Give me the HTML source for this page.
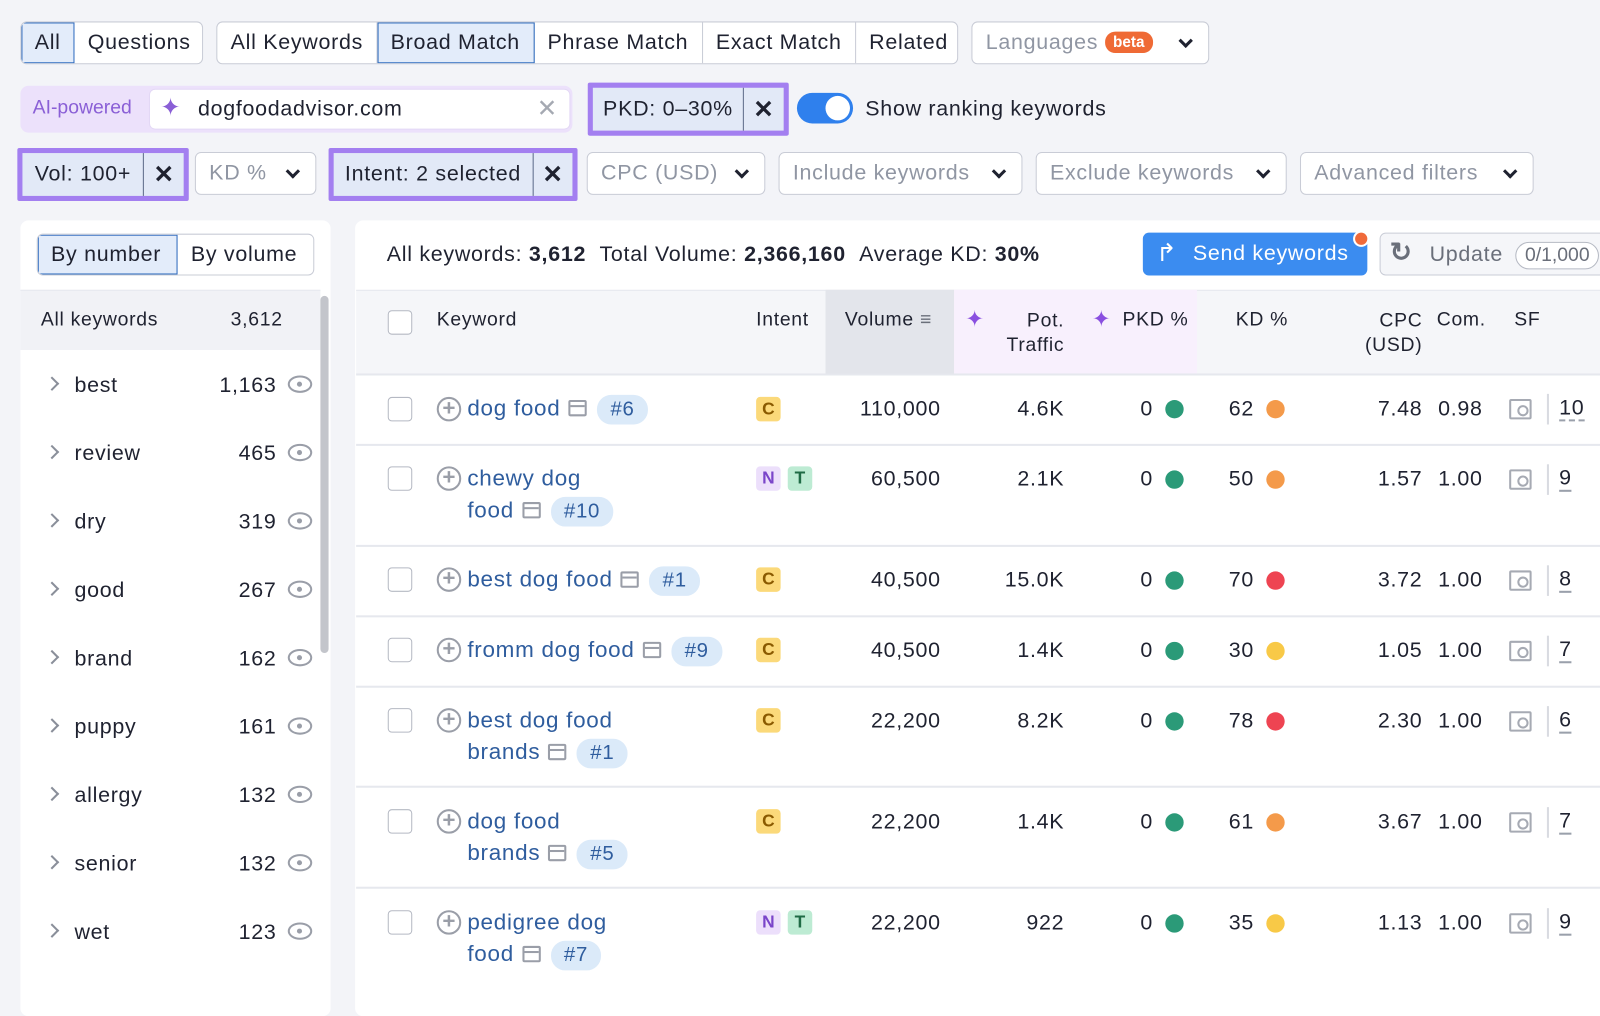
<!DOCTYPE html>
<html><head><meta charset="utf-8"><style>
*{box-sizing:border-box;margin:0;padding:0}
html,body{width:1600px;height:988px;overflow:hidden;background:#f3f4f8}
#w{position:absolute;left:0;top:0;width:1600px;height:968px;transform:scale(1.0204);transform-origin:0 0;font-family:"Liberation Sans",sans-serif;color:#1f2230;font-size:21px;letter-spacing:0.7px}
.a{position:absolute;white-space:nowrap}
.btn{position:absolute;height:42px;border:1px solid #c9ccd6;background:#fff;display:flex;align-items:center;border-radius:6px;overflow:hidden}
.btn span{padding:0 13px;height:100%;display:flex;align-items:center;border-right:1px solid #c9ccd6;white-space:nowrap}
.btn span:last-child{border-right:none}
.sel{background:#e3ecfa;outline:1px solid #2f6cbf;outline-offset:-1px}
.chip{position:absolute;height:52px;background:#a37ff0;padding:5px;border-radius:2px}
.chip div{background:#e2e9f7;height:42px;display:flex;align-items:center;color:#1f2230;white-space:nowrap}
.chip b{font-weight:bold;border-left:1px solid #5d6b89;height:100%;display:flex;align-items:center;padding:0 9px;font-size:24px}
.dd{position:absolute;height:42px;border:1px solid #c9ccd6;background:#fff;border-radius:6px;color:#9096a3;display:flex;align-items:center;padding:0 13px;justify-content:space-between;white-space:nowrap}
.chev{width:10px;height:10px;border-right:3px solid #1f2230;border-bottom:3px solid #1f2230;transform:rotate(45deg);margin:-5px 4px 0 10px}
.lrow{position:absolute;left:20px;width:294px;height:67px}
.lrow .n{position:absolute;left:53px;top:22px}
.lrow .c{position:absolute;right:43px;top:22px}
.lrow .ar{position:absolute;left:26px;top:27px;width:10px;height:10px;border-right:2px solid #8a8f9a;border-top:2px solid #8a8f9a;transform:rotate(45deg)}
.eye{position:absolute;right:8px;top:24px;width:24px;height:17px;border:2.5px solid #9a9ea8;border-radius:50%/50%}
.eye:after{content:"";position:absolute;left:7px;top:4px;width:5px;height:5px;background:#9a9ea8;border-radius:50%}
.cb{position:absolute;left:380px;width:24px;height:24px;border:1.5px solid #b5b9c3;border-radius:4px;background:#fff}
.plus{position:absolute;left:428px;width:24px;height:24px;border:2.5px solid #9a9ea8;border-radius:50%;color:#9a9ea8;font-size:22px;line-height:17px;text-align:center;font-weight:bold;letter-spacing:0}
.kw{position:absolute;left:458px;color:#2f5d9e;font-size:22px}
.ic{display:inline-block;width:18px;height:16px;border:2.5px solid #9a9ea8;border-radius:2px;vertical-align:-1px;margin-left:8px;position:relative}
.ic:after{content:"";position:absolute;left:0;right:0;top:3px;border-top:2.5px solid #9a9ea8}
.pos{display:inline-block;background:#dbeaf9;color:#2f5d9e;border-radius:14px;padding:3px 13px;margin-left:10px;font-size:20px}
.tag{position:absolute;width:24px;height:24px;border-radius:4px;font-size:17px;font-weight:bold;text-align:center;line-height:24px;letter-spacing:0}
.C{background:#fbd97a;color:#8a5a00}.N{background:#ecdffb;color:#7a45c9}.T{background:#bdebd3;color:#1f6b45}
.r{position:absolute;text-align:right;white-space:nowrap}
.dot{position:absolute;width:18px;height:18px;border-radius:50%}
.g{background:#2b9a78}.o{background:#f49a4a}.rd{background:#ee4452}.y{background:#f8c947}
.hl{position:absolute;left:349px;width:1251px;border-top:2px solid #e6e8ee}
.sf{position:absolute;left:1479px;width:22px;height:20px;border:2.5px solid #a6aab3;border-radius:2px}
.sf:after{content:"";position:absolute;right:1px;bottom:1px;width:7px;height:7px;border:2px solid #a6aab3;border-radius:50%}
.sep{position:absolute;left:1516px;width:2px;height:30px;background:#d9dbe1}
.sfn{position:absolute;left:1528px;font-size:21px;border-bottom:2px dashed #9aa0ab;line-height:22px}
</style></head><body><div id="w">

<div class="btn" style="left:20px;top:21px;width:179px"><span class="sel" style="width:52px">All</span><span>Questions</span></div>
<div class="btn" style="left:212px;top:21px;width:727px"><span>All Keywords</span><span class="sel">Broad Match</span><span>Phrase Match</span><span>Exact Match</span><span>Related</span></div>
<div class="dd" style="left:952px;top:21px;width:233px"><span>Languages <span style="background:#ef6a35;color:#fff;font-size:15px;border-radius:10px;padding:2px 8px;font-weight:bold;vertical-align:2px;letter-spacing:0">beta</span></span><i class="chev"></i></div>

<div class="a" style="left:20px;top:84px;width:541px;height:46px;background:#ece1fb;border-radius:8px"></div>
<div class="a" style="left:32px;top:95px;color:#8a5fd6;font-size:19px;letter-spacing:0">AI-powered</div>
<div class="a" style="left:146px;top:87px;width:413px;height:40px;background:#fff;border-radius:6px;border:1px solid #e3d8f5"></div>
<div class="a" style="left:157px;top:91px;color:#8a5fd6;font-size:24px">✦</div>
<div class="a" style="left:194px;top:95px">dogfoodadvisor.com</div>
<div class="a" style="left:526px;top:92px;color:#a5a9b2;font-size:24px">✕</div>
<div class="chip" style="left:576px;top:81px"><div><span style="padding:0 10px">PKD: 0–30%</span><b>✕</b></div></div>
<div class="a" style="left:781px;top:91px;width:55px;height:30px;background:#2f80ed;border-radius:15px"><div style="position:absolute;right:3px;top:3px;width:24px;height:24px;background:#fff;border-radius:50%"></div></div>
<div class="a" style="left:848px;top:95px">Show ranking keywords</div>

<div class="chip" style="left:17px;top:145px"><div><span style="padding:0 12px">Vol: 100+</span><b>✕</b></div></div>
<div class="dd" style="left:191px;top:149px;width:119px"><span>KD %</span><i class="chev"></i></div>
<div class="chip" style="left:322px;top:145px"><div><span style="padding:0 11px">Intent: 2 selected</span><b>✕</b></div></div>
<div class="dd" style="left:575px;top:149px;width:175px"><span>CPC (USD)</span><i class="chev"></i></div>
<div class="dd" style="left:763px;top:149px;width:239px"><span>Include keywords</span><i class="chev"></i></div>
<div class="dd" style="left:1015px;top:149px;width:246px"><span>Exclude keywords</span><i class="chev"></i></div>
<div class="dd" style="left:1274px;top:149px;width:229px"><span>Advanced filters</span><i class="chev"></i></div>

<div class="a" style="left:20px;top:216px;width:304px;height:780px;background:#fff;border-radius:8px"></div>
<div class="btn" style="left:36px;top:229px;width:272px;height:41px"><span class="sel" style="width:137px">By number</span><span>By volume</span></div>
<div class="a" style="left:20px;top:284px;width:294px;height:59px;background:#f1f2f6;border-top:1px solid #e6e8ee"></div>
<div class="a" style="left:40px;top:303px;font-size:19px">All keywords</div>
<div class="a" style="left:226px;top:303px;font-size:19px">3,612</div>
<div class="a" style="left:314px;top:290px;width:8px;height:350px;background:#c3c5cb;border-radius:4px"></div>
<div class="lrow" style="top:344px"><i class="ar"></i><span class="n">best</span><span class="c">1,163</span><i class="eye"></i></div>
<div class="lrow" style="top:411px"><i class="ar"></i><span class="n">review</span><span class="c">465</span><i class="eye"></i></div>
<div class="lrow" style="top:478px"><i class="ar"></i><span class="n">dry</span><span class="c">319</span><i class="eye"></i></div>
<div class="lrow" style="top:545px"><i class="ar"></i><span class="n">good</span><span class="c">267</span><i class="eye"></i></div>
<div class="lrow" style="top:612px"><i class="ar"></i><span class="n">brand</span><span class="c">162</span><i class="eye"></i></div>
<div class="lrow" style="top:679px"><i class="ar"></i><span class="n">puppy</span><span class="c">161</span><i class="eye"></i></div>
<div class="lrow" style="top:746px"><i class="ar"></i><span class="n">allergy</span><span class="c">132</span><i class="eye"></i></div>
<div class="lrow" style="top:813px"><i class="ar"></i><span class="n">senior</span><span class="c">132</span><i class="eye"></i></div>
<div class="lrow" style="top:880px"><i class="ar"></i><span class="n">wet</span><span class="c">123</span><i class="eye"></i></div>

<div class="a" style="left:348px;top:216px;width:1260px;height:780px;background:#fff;border-radius:8px"></div>
<div class="a" style="left:379px;top:238px">All keywords: <b>3,612</b>&nbsp;&nbsp;Total Volume: <b>2,366,160</b>&nbsp;&nbsp;Average KD: <b>30%</b></div>
<div class="a" style="left:1120px;top:228px;width:220px;height:42px;background:#3b8cf0;border-radius:6px;color:#fff;padding:9px 0 0 49px">Send keywords</div>
<div class="a" style="left:1133px;top:234px;color:#fff;font-size:24px">↱</div>
<div class="a" style="left:1326px;top:226px;width:16px;height:16px;background:#f06a3a;border-radius:50%;border:2px solid #fff"></div>
<div class="a" style="left:1352px;top:228px;width:260px;height:42px;border:1px solid #c9ccd6;background:#f5f6f9;border-radius:6px;color:#6a6f7a;padding:9px 0 0 48px">Update <span style="border:1px solid #b5b9c3;border-radius:15px;padding:2px 8px;font-size:19px;margin-left:6px;background:#fff;letter-spacing:0">0/1,000</span></div>
<div class="a" style="left:1362px;top:232px;color:#6a6f7a;font-size:26px;font-weight:bold">↻</div>

<div class="a" style="left:349px;top:284px;width:1251px;height:83px;background:#f5f6f9;border-top:1px solid #e6e8ee"></div>
<div class="a" style="left:809px;top:284px;width:126px;height:83px;background:#e3e5eb"></div>
<div class="a" style="left:935px;top:284px;width:238px;height:83px;background:#f8f0fd"></div>
<div class="cb" style="top:304px"></div>
<div class="a" style="left:428px;top:303px;font-size:19px">Keyword</div>
<div class="a" style="left:741px;top:303px;font-size:19px">Intent</div>
<div class="a" style="left:828px;top:303px;font-size:19px">Volume <span style="color:#6a6f7a">≡</span></div>
<div class="a" style="left:946px;top:300px;color:#8a4fe0;font-size:22px">✦</div>
<div class="r" style="right:557px;top:303px;font-size:19px;line-height:24px">Pot.<br>Traffic</div>
<div class="a" style="left:1070px;top:300px;color:#8a4fe0;font-size:22px">✦</div>
<div class="a" style="left:1100px;top:303px;font-size:19px">PKD %</div>
<div class="a" style="left:1211px;top:303px;font-size:19px">KD %</div>
<div class="r" style="right:206px;top:303px;font-size:19px;line-height:24px">CPC<br>(USD)</div>
<div class="a" style="left:1408px;top:303px;font-size:19px">Com.</div>
<div class="a" style="left:1484px;top:303px;font-size:19px">SF</div>

<div class="hl" style="top:366px"></div>
<div class="hl" style="top:435px"></div>
<div class="hl" style="top:534px"></div>
<div class="hl" style="top:603px"></div>
<div class="hl" style="top:672px"></div>
<div class="hl" style="top:770px"></div>
<div class="hl" style="top:869px"></div>

<div class="cb" style="top:389px"></div><div class="plus" style="top:389px">+</div>
<div class="kw" style="top:387px">dog food<i class="ic"></i><span class="pos">#6</span></div>
<div class="tag C" style="left:741px;top:389px">C</div>
<div class="r" style="right:678px;top:389px">110,000</div><div class="r" style="right:557px;top:389px">4.6K</div>
<div class="r" style="right:470px;top:389px">0</div><i class="dot g" style="left:1142px;top:392px"></i>
<div class="r" style="right:371px;top:389px">62</div><i class="dot o" style="left:1241px;top:392px"></i>
<div class="r" style="right:206px;top:389px">7.48</div><div class="r" style="right:147px;top:389px">0.98</div>
<i class="sf" style="top:391px"></i><i class="sep" style="top:386px"></i><span class="sfn" style="top:389px">10</span>

<div class="cb" style="top:457px"></div><div class="plus" style="top:457px">+</div>
<div class="kw" style="top:456px">chewy dog</div><div class="kw" style="top:487px">food<i class="ic"></i><span class="pos">#10</span></div>
<div class="tag N" style="left:741px;top:457px">N</div><div class="tag T" style="left:772px;top:457px">T</div>
<div class="r" style="right:678px;top:458px">60,500</div><div class="r" style="right:557px;top:458px">2.1K</div>
<div class="r" style="right:470px;top:458px">0</div><i class="dot g" style="left:1142px;top:461px"></i>
<div class="r" style="right:371px;top:458px">50</div><i class="dot o" style="left:1241px;top:461px"></i>
<div class="r" style="right:206px;top:458px">1.57</div><div class="r" style="right:147px;top:458px">1.00</div>
<i class="sf" style="top:460px"></i><i class="sep" style="top:455px"></i><span class="sfn" style="top:458px">9</span>

<div class="cb" style="top:556px"></div><div class="plus" style="top:556px">+</div>
<div class="kw" style="top:555px">best dog food<i class="ic"></i><span class="pos">#1</span></div>
<div class="tag C" style="left:741px;top:556px">C</div>
<div class="r" style="right:678px;top:557px">40,500</div><div class="r" style="right:557px;top:557px">15.0K</div>
<div class="r" style="right:470px;top:557px">0</div><i class="dot g" style="left:1142px;top:560px"></i>
<div class="r" style="right:371px;top:557px">70</div><i class="dot rd" style="left:1241px;top:560px"></i>
<div class="r" style="right:206px;top:557px">3.72</div><div class="r" style="right:147px;top:557px">1.00</div>
<i class="sf" style="top:559px"></i><i class="sep" style="top:554px"></i><span class="sfn" style="top:557px">8</span>

<div class="cb" style="top:625px"></div><div class="plus" style="top:625px">+</div>
<div class="kw" style="top:624px">fromm dog food<i class="ic"></i><span class="pos">#9</span></div>
<div class="tag C" style="left:741px;top:625px">C</div>
<div class="r" style="right:678px;top:626px">40,500</div><div class="r" style="right:557px;top:626px">1.4K</div>
<div class="r" style="right:470px;top:626px">0</div><i class="dot g" style="left:1142px;top:629px"></i>
<div class="r" style="right:371px;top:626px">30</div><i class="dot y" style="left:1241px;top:629px"></i>
<div class="r" style="right:206px;top:626px">1.05</div><div class="r" style="right:147px;top:626px">1.00</div>
<i class="sf" style="top:628px"></i><i class="sep" style="top:623px"></i><span class="sfn" style="top:626px">7</span>

<div class="cb" style="top:694px"></div><div class="plus" style="top:694px">+</div>
<div class="kw" style="top:693px">best dog food</div><div class="kw" style="top:724px">brands<i class="ic"></i><span class="pos">#1</span></div>
<div class="tag C" style="left:741px;top:694px">C</div>
<div class="r" style="right:678px;top:695px">22,200</div><div class="r" style="right:557px;top:695px">8.2K</div>
<div class="r" style="right:470px;top:695px">0</div><i class="dot g" style="left:1142px;top:698px"></i>
<div class="r" style="right:371px;top:695px">78</div><i class="dot rd" style="left:1241px;top:698px"></i>
<div class="r" style="right:206px;top:695px">2.30</div><div class="r" style="right:147px;top:695px">1.00</div>
<i class="sf" style="top:697px"></i><i class="sep" style="top:692px"></i><span class="sfn" style="top:695px">6</span>

<div class="cb" style="top:793px"></div><div class="plus" style="top:793px">+</div>
<div class="kw" style="top:792px">dog food</div><div class="kw" style="top:823px">brands<i class="ic"></i><span class="pos">#5</span></div>
<div class="tag C" style="left:741px;top:793px">C</div>
<div class="r" style="right:678px;top:794px">22,200</div><div class="r" style="right:557px;top:794px">1.4K</div>
<div class="r" style="right:470px;top:794px">0</div><i class="dot g" style="left:1142px;top:797px"></i>
<div class="r" style="right:371px;top:794px">61</div><i class="dot o" style="left:1241px;top:797px"></i>
<div class="r" style="right:206px;top:794px">3.67</div><div class="r" style="right:147px;top:794px">1.00</div>
<i class="sf" style="top:796px"></i><i class="sep" style="top:791px"></i><span class="sfn" style="top:794px">7</span>

<div class="cb" style="top:892px"></div><div class="plus" style="top:892px">+</div>
<div class="kw" style="top:891px">pedigree dog</div><div class="kw" style="top:922px">food<i class="ic"></i><span class="pos">#7</span></div>
<div class="tag N" style="left:741px;top:892px">N</div><div class="tag T" style="left:772px;top:892px">T</div>
<div class="r" style="right:678px;top:893px">22,200</div><div class="r" style="right:557px;top:893px">922</div>
<div class="r" style="right:470px;top:893px">0</div><i class="dot g" style="left:1142px;top:896px"></i>
<div class="r" style="right:371px;top:893px">35</div><i class="dot y" style="left:1241px;top:896px"></i>
<div class="r" style="right:206px;top:893px">1.13</div><div class="r" style="right:147px;top:893px">1.00</div>
<i class="sf" style="top:895px"></i><i class="sep" style="top:890px"></i><span class="sfn" style="top:893px">9</span>
</div></body></html>
